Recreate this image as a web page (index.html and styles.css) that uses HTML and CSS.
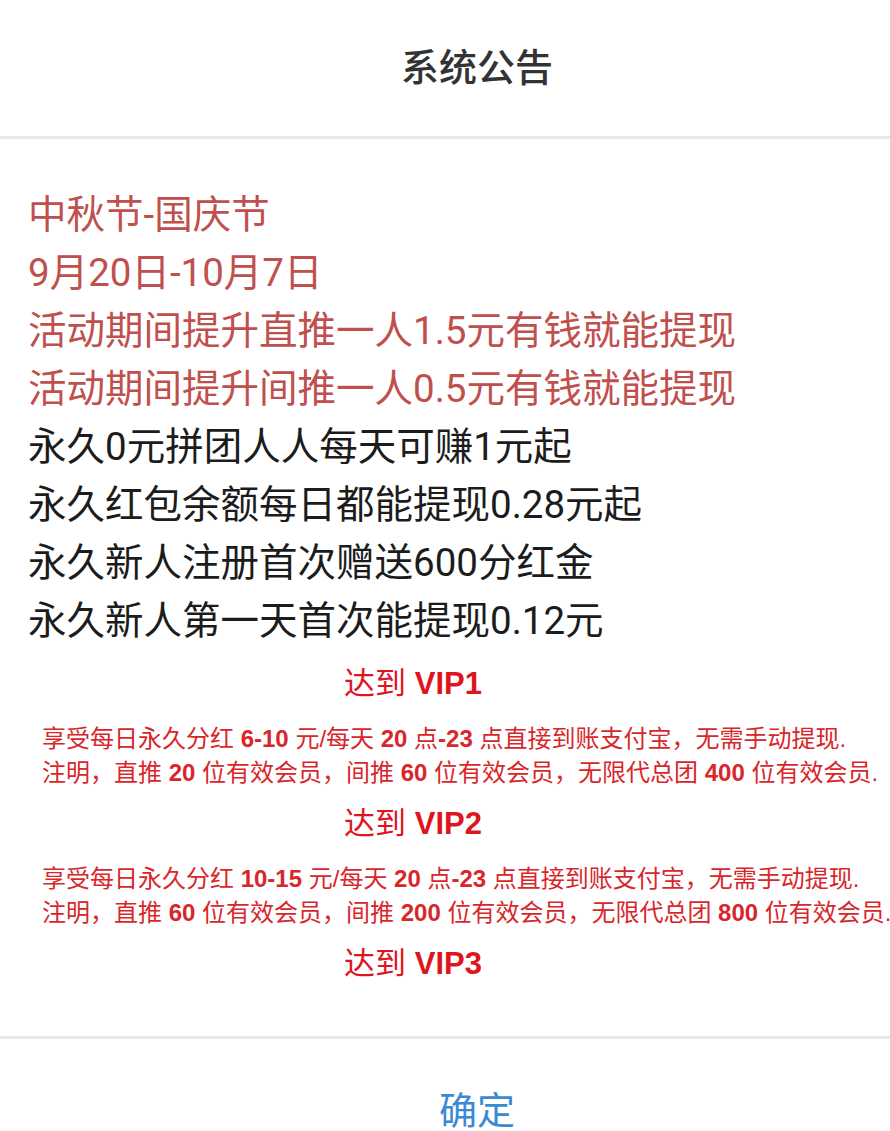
FILE: index.html
```html
<!DOCTYPE html>
<html lang="zh-CN">
<head>
    <meta charset="UTF-8">
    <meta name="viewport" content="width=device-width, initial-scale=1.0">
    <title>系统公告</title>
    <link rel="stylesheet" href="styles.css">
</head>
<body>
    <div class="dialog">
        <div class="dialog-header">系统公告</div>
        <div class="dialog-body">
            <div class="notice-line event">中秋节-国庆节</div>
            <div class="notice-line event">9月20日-10月7日</div>
            <div class="notice-line event">活动期间提升直推一人1.5元有钱就能提现</div>
            <div class="notice-line event">活动期间提升间推一人0.5元有钱就能提现</div>
            <div class="notice-line">永久0元拼团人人每天可赚1元起</div>
            <div class="notice-line">永久红包余额每日都能提现0.28元起</div>
            <div class="notice-line">永久新人注册首次赠送600分红金</div>
            <div class="notice-line">永久新人第一天首次能提现0.12元</div>

            <div class="vip">
                <div class="vip-title">达到 <b>VIP1</b></div>
                <div class="vip-text">享受每日永久分红 <b>6-10</b> 元/每天 <b>20</b> 点<b>-23</b> 点直接到账支付宝，无需手动提现.</div>
                <div class="vip-text">注明，直推 <b>20</b> 位有效会员，间推 <b>60</b> 位有效会员，无限代总团 <b>400</b> 位有效会员.</div>
            </div>
            <div class="vip">
                <div class="vip-title">达到 <b>VIP2</b></div>
                <div class="vip-text">享受每日永久分红 <b>10-15</b> 元/每天 <b>20</b> 点<b>-23</b> 点直接到账支付宝，无需手动提现.</div>
                <div class="vip-text">注明，直推 <b>60</b> 位有效会员，间推 <b>200</b> 位有效会员，无限代总团 <b>800</b> 位有效会员.</div>
            </div>
            <div class="vip">
                <div class="vip-title">达到 <b>VIP3</b></div>
            </div>
        </div>
        <div class="dialog-footer">
            <button class="confirm-btn">确定</button>
        </div>
    </div>
</body>
</html>
```

FILE: styles.css
```css
body {
    margin: 0;
    background-color: #ffffff;
    font-family: Roboto, "Noto Sans CJK SC", sans-serif;
    overflow: hidden;
}
.dialog {
    width: 954px;
    background: #ffffff;
}
.dialog-header {
    height: 136px;
    line-height: 136px;
    text-align: center;
    font-size: 38px;
    font-weight: 500;
    color: #333333;
    border-bottom: 3px solid #e8e8e8;
}
.dialog-body {
    padding: 47px 0 50px 28px;
    border-bottom: 3px solid #e8e8e8;
}
.notice-line {
    font-size: 38.5px;
    line-height: 58px;
    color: #1c1c1c;
    white-space: nowrap;
}
.notice-line.event {
    color: #c0504d;
}
.vip {
    width: 770px;
    margin-top: 12px;
}
.vip-title {
    text-align: center;
    font-size: 31px;
    line-height: 44px;
    color: #e0141e;
    font-family: "Liberation Sans", "Noto Sans CJK SC", sans-serif;
    margin-bottom: 16px;
}
.vip-title b {
    font-weight: bold;
}
.vip-text {
    padding-left: 14px;
    font-size: 24px;
    line-height: 34px;
    color: #d8262b;
    white-space: nowrap;
    font-family: "Liberation Sans", "Noto Sans CJK SC", sans-serif;
}
.vip-text:last-child {
    margin-bottom: 2px;
}
.vip:last-child .vip-title {
    margin-bottom: 0;
}
.dialog-footer {
    height: 136px;
    display: flex;
    align-items: center;
    justify-content: center;
}
.confirm-btn {
    border: none;
    background: none;
    padding: 0;
    font-family: "Noto Sans CJK SC", sans-serif;
    font-size: 38px;
    color: #3b8ad3;
    cursor: pointer;
}
```
